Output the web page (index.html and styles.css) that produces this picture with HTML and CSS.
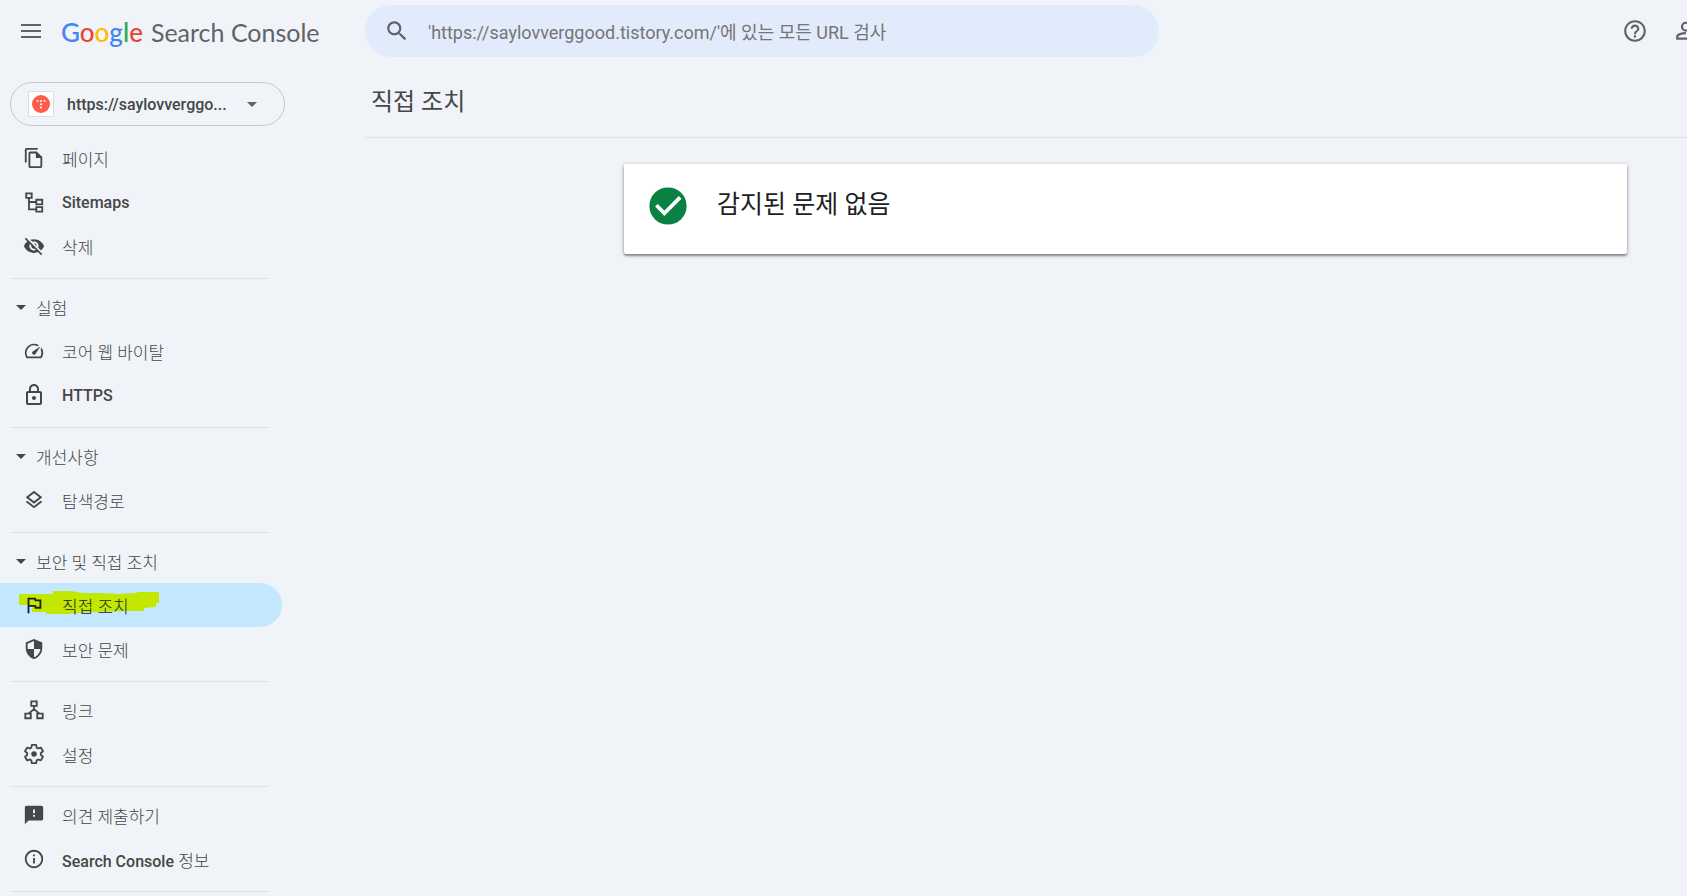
FILE: index.html
```html
<!DOCTYPE html>
<html lang="ko">
<head>
    <meta charset="UTF-8">
    <meta name="viewport" content="width=device-width, initial-scale=1.0">
    <title>직접 조치</title>
    <link rel="stylesheet" href="styles.css">
</head>
<body>
    <header class="header">
        <div class="brand">
            <button type="button" class="icon-button" aria-label="메뉴">
                <svg class="menu-icon" viewBox="0 0 20 14"><path d="M0 0h20v2H0zM0 6h20v2H0zM0 12h20v2H0z"/></svg>
            </button>
            <a href="#" class="logo">
                <span class="google"><span class="blue">G</span><span class="red">o</span><span class="yellow">o</span><span class="blue">g</span><span class="green">l</span><span class="red">e</span></span>
                <span class="product">Search Console</span>
            </a>
        </div>
        <form class="search">
            <svg class="search-icon" viewBox="0 0 24 24"><path d="M15.5 14h-.79l-.28-.27C15.41 12.59 16 11.11 16 9.5 16 5.91 13.09 3 9.5 3S3 5.91 3 9.5 5.91 16 9.5 16c1.61 0 3.09-.59 4.23-1.57l.27.28v.79l5 4.99L20.49 19l-4.99-5zm-6 0C7.01 14 5 11.99 5 9.5S7.01 5 9.5 5 14 7.01 14 9.5 11.99 14 9.5 14z"/></svg>
            <input type="text" aria-label="URL 검사" placeholder="'https://saylovverggood.tistory.com/'에 있는 모든 URL 검사">
        </form>
        <div class="actions">
            <button type="button" class="icon-button" aria-label="도움말">
                <svg class="action-icon" viewBox="0 0 24 24"><path d="M11 18h2v-2h-2v2zm1-16C6.48 2 2 6.48 2 12s4.48 10 10 10 10-4.48 10-10S17.52 2 12 2zm0 18c-4.41 0-8-3.59-8-8s3.59-8 8-8 8 3.59 8 8-3.59 8-8 8zm0-14c-2.21 0-4 1.79-4 4h2c0-1.1.9-2 2-2s2 .9 2 2c0 2-3 1.75-3 5h2c0-2.25 3-2.5 3-5 0-2.21-1.79-4-4-4z"/></svg>
            </button>
            <button type="button" class="icon-button" aria-label="사용자 관리">
                <svg class="action-icon line" viewBox="0 0 24 24"><circle cx="11" cy="8" r="3.6"/><path d="M12 19H3v-1.6c0-2.2 4-3.4 8-3.4"/></svg>
            </button>
        </div>
    </header>

    <div class="layout">
        <aside class="sidebar">
            <button type="button" class="property">
                <span class="favicon">
                    <svg viewBox="0 0 18 18"><circle cx="9" cy="9" r="9" fill="#ff5a4a"/><g fill="#fff"><circle cx="5.5" cy="6" r="1"/><circle cx="9" cy="6" r="1"/><circle cx="12.5" cy="6" r="1"/><circle cx="9" cy="9.3" r="1"/><circle cx="9" cy="12.6" r="1"/></g></svg>
                </span>
                <span class="property-name latin" title="https://saylovverggood.tistory.com/">https://saylovverggo...</span>
                <svg class="caret" viewBox="0 0 10 5"><path d="M0 0h10L5 5z"/></svg>
            </button>

            <nav class="nav">
                <section class="group">
                    <a href="#" class="item">
                        <svg class="icon" viewBox="0 0 24 24"><path d="M16 1H4c-1.1 0-2 .9-2 2v14h2V3h12V1zm-1 4H8c-1.1 0-1.99.9-1.99 2L6 21c0 1.1.89 2 1.99 2H19c1.1 0 2-.9 2-2V11l-6-6zM8 21V7h6v5h5v9H8z"/></svg>
                        <span>페이지</span>
                    </a>
                    <a href="#" class="item">
                        <svg class="icon line" viewBox="0 0 24 24"><path d="M3.5 2.5h6v5h-6zM14.5 9.5h6.5v5h-6.5zM14.5 17.5h6.5v5h-6.5zM6.5 7.5V20h8M6.5 12h8"/></svg>
                        <span class="latin">Sitemaps</span>
                    </a>
                    <a href="#" class="item">
                        <svg class="icon" viewBox="0 0 24 24"><path d="M12 7c2.76 0 5 2.24 5 5 0 .65-.13 1.26-.36 1.83l2.92 2.92c1.51-1.26 2.7-2.89 3.43-4.75-1.73-4.39-6-7.5-11-7.5-1.4 0-2.74.25-3.98.7l2.16 2.16C10.74 7.13 11.35 7 12 7zM2 4.27l2.28 2.28.46.46C3.08 8.3 1.78 10.02 1 12c1.73 4.39 6 7.5 11 7.5 1.55 0 3.03-.3 4.38-.84l.42.42L19.73 22 21 20.73 3.27 3 2 4.27zM7.53 9.8l1.55 1.55c-.05.21-.08.43-.08.65 0 1.66 1.34 3 3 3 .22 0 .44-.03.65-.08l1.55 1.55c-.67.33-1.41.53-2.2.53-2.76 0-5-2.24-5-5 0-.79.2-1.53.53-2.2zm4.31-.78l3.15 3.15.02-.16c0-1.66-1.34-3-3-3l-.17.01z"/></svg>
                        <span>삭제</span>
                    </a>
                </section>

                <section class="group">
                    <button type="button" class="group-title">
                        <svg class="caret" viewBox="0 0 10 5"><path d="M0 0h10L5 5z"/></svg>
                        <span>실험</span>
                    </button>
                    <a href="#" class="item">
                        <svg class="icon" viewBox="0 0 24 24"><path d="M20.38 8.57l-1.23 1.85a8 8 0 0 1-.22 7.58H5.07A8 8 0 0 1 15.58 6.85l1.85-1.23A10 10 0 0 0 3.35 19a2 2 0 0 0 1.72 1h13.85a2 2 0 0 0 1.74-1 10 10 0 0 0-.27-10.44zm-9.79 6.84a2 2 0 0 0 2.83 0l5.66-8.49-8.49 5.66a2 2 0 0 0 0 2.83z"/></svg>
                        <span>코어 웹 바이탈</span>
                    </a>
                    <a href="#" class="item">
                        <svg class="icon" viewBox="2 1 20 22"><path d="M12 17c1.1 0 2-.9 2-2s-.9-2-2-2-2 .9-2 2 .9 2 2 2zm6-9h-1V6c0-2.76-2.24-5-5-5S7 3.24 7 6v2H6c-1.1 0-2 .9-2 2v10c0 1.1.9 2 2 2h12c1.1 0 2-.9 2-2V10c0-1.1-.9-2-2-2zM8.9 6c0-1.71 1.39-3.1 3.1-3.1s3.1 1.39 3.1 3.1v2H8.9V6zM18 20H6V10h12v10z"/></svg>
                        <span class="latin">HTTPS</span>
                    </a>
                </section>

                <section class="group">
                    <button type="button" class="group-title">
                        <svg class="caret" viewBox="0 0 10 5"><path d="M0 0h10L5 5z"/></svg>
                        <span>개선사항</span>
                    </button>
                    <a href="#" class="item">
                        <svg class="icon" viewBox="0 0 24 24"><path d="M11.99 18.54l-7.37-5.73L3 14.07l9 7 9-7-1.63-1.27-7.38 5.74zM12 16l7.36-5.73L21 9l-9-7-9 7 1.63 1.27L12 16zm0-11.47L17.74 9 12 13.47 6.26 9 12 4.53z"/></svg>
                        <span>탐색경로</span>
                    </a>
                </section>

                <section class="group">
                    <button type="button" class="group-title">
                        <svg class="caret" viewBox="0 0 10 5"><path d="M0 0h10L5 5z"/></svg>
                        <span>보안 및 직접 조치</span>
                    </button>
                    <a href="#" class="item active" aria-current="page">
                        <!-- highlighter stroke behind the label -->
                        <svg class="marker" viewBox="0 0 141 24"><path d="M0 3h34V0h18l12 2h18l18 1 16-1 4-1h20v11h-3v4h-3l-9 1v3h-18l-36 1-22 2H27v-2H13v-7H0z"/></svg>
                        <svg class="icon" viewBox="0 0 24 24"><path d="M12.36 6l.4 2H18v6h-3.36l-.4-2H7V6h5.36M14 4H5v17h2v-7h5.6l.4 2h7V6h-5.6L14 4z"/></svg>
                        <span>직접 조치</span>
                    </a>
                    <a href="#" class="item">
                        <svg class="icon" viewBox="0 0 24 24"><path d="M12 1L3 5v6c0 5.55 3.84 10.74 9 12 5.16-1.26 9-6.45 9-12V5l-9-4zm0 10.99h7c-.53 4.12-3.28 7.79-7 8.94V12H5V6.3l7-3.11v8.8z"/></svg>
                        <span>보안 문제</span>
                    </a>
                </section>

                <section class="group">
                    <a href="#" class="item">
                        <svg class="icon line" viewBox="0 0 24 24"><path d="M9 2.5h6v5H9zM2.5 16h6v5h-6zM15.5 16h6v5h-6zM12 7.5V12M6 16l6-5 6 5"/></svg>
                        <span>링크</span>
                    </a>
                    <a href="#" class="item">
                        <svg class="icon" viewBox="0 0 24 24"><path fill="none" stroke="currentColor" stroke-width="2" d="M19.43 12.98c.04-.32.07-.64.07-.98 0-.34-.03-.66-.07-.98l2.11-1.65c.19-.15.24-.42.12-.64l-2-3.46c-.09-.16-.26-.25-.44-.25-.06 0-.12.01-.17.03l-2.49 1c-.52-.4-1.08-.73-1.69-.98l-.38-2.65C14.46 2.18 14.25 2 14 2h-4c-.25 0-.46.18-.49.42l-.38 2.65c-.61.25-1.17.59-1.69.98l-2.49-1c-.06-.02-.12-.03-.18-.03-.17 0-.34.09-.43.25l-2 3.46c-.13.22-.07.49.12.64l2.11 1.65c-.04.32-.07.65-.07.98 0 .33.03.66.07.98l-2.11 1.65c-.19.15-.24.42-.12.64l2 3.46c.09.16.26.25.44.25.06 0 .12-.01.17-.03l2.49-1c.52.4 1.08.73 1.69.98l.38 2.65c.03.24.24.42.49.42h4c.25 0 .46-.18.49-.42l.38-2.65c.61-.25 1.17-.59 1.69-.98l2.49 1c.06.02.12.03.18.03.17 0 .34-.09.43-.25l2-3.46c.12-.22.07-.49-.12-.64l-2.11-1.65z"/><circle cx="12" cy="12" r="3"/></svg>
                        <span>설정</span>
                    </a>
                </section>

                <section class="group">
                    <a href="#" class="item">
                        <svg class="icon" viewBox="0 0 24 24"><path d="M20 2H4c-1.1 0-1.99.9-1.99 2L2 22l4-4h14c1.1 0 2-.9 2-2V4c0-1.1-.9-2-2-2zm-7 12h-2v-2h2v2zm0-4h-2V6h2v4z"/></svg>
                        <span>의견 제출하기</span>
                    </a>
                    <a href="#" class="item">
                        <svg class="icon" viewBox="0 0 24 24"><path d="M11 7h2v2h-2zm0 4h2v6h-2zm1-9C6.48 2 2 6.48 2 12s4.48 10 10 10 10-4.48 10-10S17.52 2 12 2zm0 18c-4.41 0-8-3.59-8-8s3.59-8 8-8 8 3.59 8 8-3.59 8-8 8z"/></svg>
                        <span><span class="latin">Search Console</span> 정보</span>
                    </a>
                </section>
            </nav>
        </aside>

        <main class="content">
            <h1>직접 조치</h1>
            <div class="card">
                <svg class="check" viewBox="2 2 20 20"><circle cx="12" cy="12" r="9.8" fill="#0b8043"/><path fill="none" stroke="#fff" stroke-width="2" d="M5.9 11.6l4.2 4.2 8.3-8.3"/></svg>
                <h2>감지된 문제 없음</h2>
            </div>
        </main>
    </div>
</body>
</html>
```

FILE: styles.css
```css
* {
    box-sizing: border-box;
}
body {
    margin: 0;
    background-color: #f0f4f9;
    color: #444746;
    font-family: Roboto, "Noto Sans CJK KR", sans-serif;
    font-size: 17px;
    overflow-x: hidden;
}
button {
    border: none;
    padding: 0;
    background: none;
    color: inherit;
    font: inherit;
    cursor: pointer;
}
a {
    color: inherit;
    text-decoration: none;
}
svg {
    display: block;
    flex: none;
    fill: currentColor;
}
.line {
    fill: none;
    stroke: currentColor;
    stroke-width: 2;
}

/* Header */
.header {
    display: flex;
    align-items: center;
    height: 62px;
    color: #5f6368;
    overflow: hidden;
}
.brand {
    display: flex;
    align-items: center;
    gap: 20px;
    flex: none;
    width: 365px;
    padding-left: 21px;
}
.menu-icon {
    width: 20px;
    height: 14px;
}
.logo {
    display: flex;
    align-items: baseline;
    gap: 8px;
    padding-top: 2px;
    font-family: Lato, sans-serif;
    font-size: 25px;
    line-height: 32px;
    white-space: nowrap;
}
.google {
    font-size: 26px;
    font-weight: 500;
}
.blue {
    color: #4285f4;
}
.red {
    color: #ea4335;
}
.yellow {
    color: #fbbc04;
}
.green {
    color: #34a853;
}
.search {
    display: flex;
    align-items: center;
    gap: 18px;
    flex: 1;
    max-width: 794px;
    height: 52px;
    padding: 0 19px;
    border-radius: 26px;
    background-color: #e2ebfc;
}
.search-icon {
    width: 26px;
    height: 26px;
}
.search input {
    flex: 1;
    min-width: 0;
    border: none;
    outline: none;
    padding: 2px 0 0;
    background: none;
    font-family: inherit;
    font-size: 18px;
}
.search input::placeholder {
    color: #757575;
    opacity: 1;
}
.actions {
    display: flex;
    gap: 26px;
    margin-left: auto;
    margin-right: -13px; /* second icon runs past the window edge */
}
.action-icon {
    width: 26px;
    height: 26px;
}

/* Sidebar */
.layout {
    display: flex;
}
.sidebar {
    flex: none;
    width: 365px;
    padding-top: 20px;
    font-weight: 300;
}
.latin {
    font-size: 16px;
    font-weight: 500;
}
.property {
    display: flex;
    align-items: center;
    width: 275px;
    height: 44px;
    margin-left: 10px;
    padding: 0 27px 0 17px;
    border: 1px solid #c4c7c5;
    border-radius: 22px;
}
.property .caret {
    color: #5f6368;
}
.favicon {
    flex: none;
    padding: 3px;
    border: 1px solid #dadce0;
    border-radius: 2px;
    background-color: #ffffff;
}
.favicon svg {
    width: 18px;
    height: 18px;
}
.property-name {
    flex: 1;
    margin-left: 13px;
    white-space: nowrap;
    text-align: left;
}
.caret {
    width: 10px;
    height: 5px;
}
.nav {
    padding-top: 10px;
}
.group {
    width: 282px;
}
.group::after {
    content: "";
    display: block;
    height: 1px;
    margin: 10px 13px 0 10px;
    background-color: #dfe1e3;
}
.group + .group {
    padding-top: 6px;
}
.item,
.group-title {
    display: flex;
    align-items: center;
    width: 100%;
    height: 44px;
}
.item {
    position: relative;
    gap: 17px;
    padding-left: 23px;
    border-radius: 0 22px 22px 0;
}
.item span {
    position: relative;
}
.group-title {
    gap: 10px;
    padding-left: 16px;
}
.icon {
    position: relative;
    width: 22px;
    height: 22px;
}
.active {
    background-color: #c2e7ff;
    color: #1f1f1f;
}
.marker {
    position: absolute;
    left: 19px;
    top: 8px;
    width: 141px;
    height: 24px;
    color: #c3e800;
}

/* Content */
.content {
    flex: 1;
    min-width: 0;
}
h1,
h2 {
    margin: 0;
    font-size: 24px;
    font-weight: 400;
    line-height: 36px;
}
h1 {
    padding: 22px 6px 17px;
    border-bottom: 1px solid #dfe1e3;
}
h2 {
    font-size: 25px;
}
.card {
    display: flex;
    align-items: flex-start;
    gap: 30px;
    margin: 26px 60px 0 259px;
    padding: 23px 25px 29px;
    border-radius: 2px;
    background-color: #ffffff;
    color: #202124;
    box-shadow: 0 1px 4px rgba(0, 0, 0, 0.3), 0 2px 2px rgba(0, 0, 0, 0.3);
}
.check {
    width: 38px;
    height: 38px;
}
```
